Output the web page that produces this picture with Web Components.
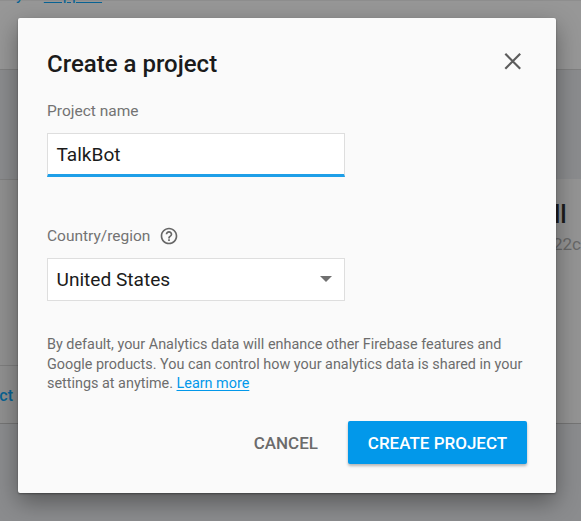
<!DOCTYPE html>
<html lang="en">
<head>
<meta charset="utf-8">
<title>Create a project</title>
<style>
  html, body { margin: 0; width: 581px; height: 521px; overflow: hidden; }
  body { font-family: Roboto, "Liberation Sans", sans-serif; }
</style>
</head>
<body>
<project-screen></project-screen>
<script>
const define = (name, markup) => {
  const template = document.createElement('template');
  template.innerHTML = markup;
  customElements.define(name, class extends HTMLElement {
    constructor() {
      super();
      this.attachShadow({ mode: 'open' }).append(template.content.cloneNode(true));
    }
  });
};

define('console-page', `
<style>
  :host { display: grid; grid-template-rows: 70px 109px 245px 1fr; height: 521px; background: #8b8c8e; overflow: hidden; }
  header { box-sizing: border-box; background: #979797; border-top: 1px solid #8e8e8e; border-bottom: 1px solid #808080; padding-left: 16px; line-height: 18px; font-size: 16.5px; color: #086394; white-space: pre; }
  header div { margin-top: -15px; display: flex; gap: 20px; }
  u { text-underline-offset: 2px; }
  .cards { display: flex; justify-content: space-between; }
  .card { box-sizing: border-box; background: #949494; border-bottom: 1px solid #757575; overflow: hidden; }
  .left { width: 120px; display: grid; grid-template-rows: 185px 1fr; background: #909090; border-top: 1px solid #808080; }
  .action { border-top: 1px solid #7e7e7e; color: #086394; font-weight: 500; font-size: 16px; line-height: 59px; }
  .action span { display: block; width: 13px; direction: rtl; white-space: nowrap; }
  .right { width: 61px; padding: 22px 0 0 34px; white-space: nowrap; }
  .name { font-size: 25px; font-weight: 500; line-height: 28px; color: #1c1c1c; }
  .id { font-size: 17px; line-height: 24px; margin: 3px 0 0 -1px; color: #686868; }
</style>
<header><div><span>y</span><u>Support</u></div></header>
<div></div>
<div class="cards">
  <section class="card left"><div></div><div class="action"><span>ct</span></div></section>
  <section class="card right"><div class="name">ll</div><div class="id">22c</div></section>
</div>
<div></div>`);

define('close-icon', `
<style>:host { display: block; width: 18px; height: 18px; } svg { display: block; }</style>
<svg width="18" height="18" viewBox="0 0 18 18" fill="none" stroke="#5c5c5c" stroke-width="2.2"><path d="M1.300 1.800 16.200 16.700M16.200 1.800 1.300 16.700"/></svg>`);

define('help-icon', `
<style>:host { display: block; width: 20px; height: 20px; } svg { display: block; }</style>
<svg width="20" height="20" viewBox="0 0 24 24" fill="#666"><path d="M11 18h2v-2h-2v2zm1-16C6.480 2 2 6.480 2 12s4.480 10 10 10 10-4.480 10-10S17.520 2 12 2zm0 18c-4.410 0-8-3.590-8-8s3.590-8 8-8 8 3.590 8 8-3.590 8-8 8zm0-14c-2.210 0-4 1.790-4 4h2c0-1.100.9-2 2-2s2 .9 2 2c0 2-3 1.750-3 5h2c0-2.250 3-2.500 3-5 0-2.210-1.790-4-4-4z"/></svg>`);

define('form-field', `
<style>
  :host { display: block; width: 298px; height: 75px; }
  .label { display: flex; align-items: center; gap: 9px; height: 20px; font-size: 15.5px; color: #737373; }
  .box { box-sizing: border-box; display: flex; align-items: center; justify-content: space-between; height: 43px; margin-top: 12px; padding: 0 12px 1px 8.500px; border: 1px solid #dedede; background: #fff; font-size: 19.1px; color: #1b1b1b; }
  :host([focused]) .box { height: 44px; padding-top: 2px; border-bottom: 3px solid #1e9fe8; }
</style>
<div class="label"><slot name="label"></slot><slot name="hint"></slot></div>
<div class="box"><slot></slot><slot name="arrow"></slot></div>`);

define('drop-arrow', `
<style>:host { display: block; width: 12px; height: 6px; } svg { display: block; }</style>
<svg width="12" height="6" viewBox="0 0 12 6"><path d="M0 0h12L6 6z" fill="#707070"/></svg>`);

define('flat-button', `
<style>
  :host { box-sizing: border-box; display: flex; align-items: center; justify-content: center; height: 43px; padding: 0 20px; font-size: 17px; font-weight: 500; color: #6b6b6b; border-radius: 2px; white-space: nowrap; }
  :host([primary]) { width: 179px; padding: 0; background: #0298ea; color: #fff; box-shadow: 0 2px 3px rgba(0,0,0,.28); }
</style>
<slot></slot>`);

define('modal-dialog', `
<style>
  :host { box-sizing: border-box; display: flex; flex-direction: column; width: 538px; height: 475px; padding: 29px; background: #fafafa; border-radius: 2px; box-shadow: 0 1px 2px rgba(0,0,0,.35), 0 9px 24px rgba(0,0,0,.38); }
  header { display: flex; justify-content: space-between; align-items: flex-start; height: 54px; }
  h1 { margin: 2px 0 0; font-size: 24px; line-height: 30px; font-weight: 500; color: #1b1b1b; white-space: nowrap; }
  close-icon { margin: 5px 5px 0 0; }
  footer { display: flex; justify-content: flex-end; gap: 10px; margin-top: auto; }
</style>
<header><h1><slot name="title"></slot></h1><close-icon></close-icon></header>
<slot></slot>
<footer><slot name="actions"></slot></footer>`);

define('project-screen', `
<style>
  :host { display: block; position: relative; width: 581px; height: 521px; overflow: hidden; }
  modal-dialog { position: absolute; left: 18px; top: 18px; }
  .region { margin-top: 50px; }
  .note { margin-top: 34px; font-size: 14.4px; line-height: 19.5px; color: #6d6d6d; white-space: nowrap; }
  .note a { color: #0298ea; text-decoration: underline; text-underline-offset: 2px; }
</style>
<console-page></console-page>
<modal-dialog>
  <span slot="title">Create a project</span>
  <form-field focused><span slot="label">Project name</span><span>TalkBot</span></form-field>
  <form-field class="region"><span slot="label">Country/region</span><help-icon slot="hint"></help-icon><span>United States</span><drop-arrow slot="arrow"></drop-arrow></form-field>
  <div class="note">By default, your Analytics data will enhance other Firebase features and<br>Google products. You can control how your analytics data is shared in your<br>settings at anytime. <a>Learn more</a></div>
  <flat-button slot="actions">CANCEL</flat-button>
  <flat-button slot="actions" primary>CREATE PROJECT</flat-button>
</modal-dialog>`);
</script>
</body>
</html>
